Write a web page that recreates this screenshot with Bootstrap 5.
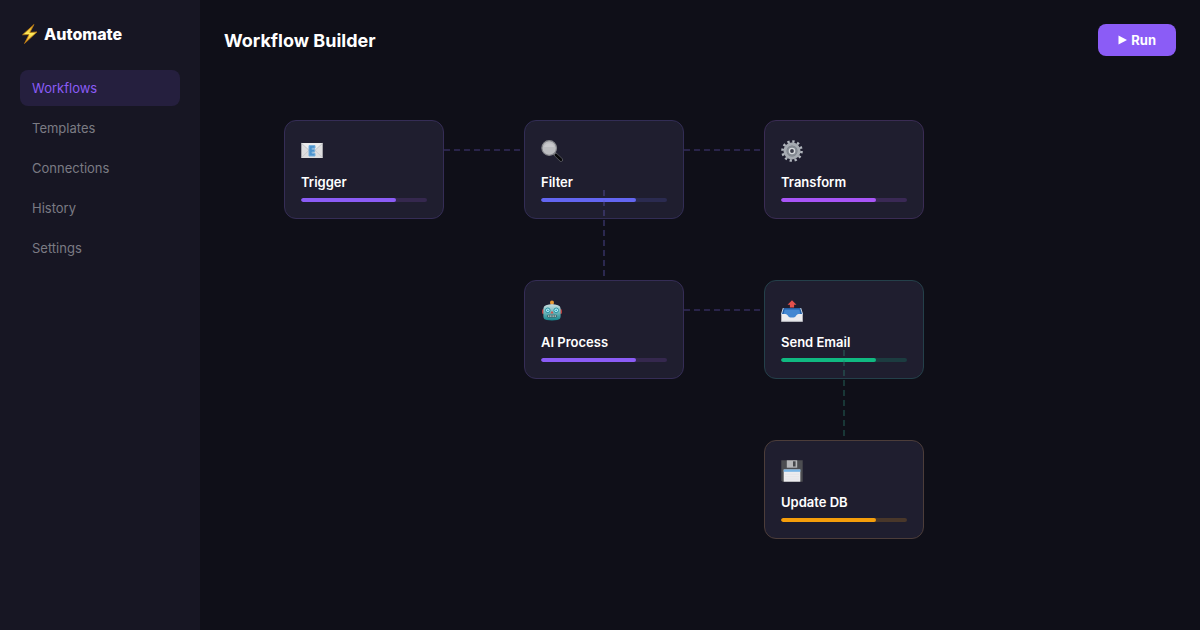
<!DOCTYPE html>
<html lang="en">
<head>
<meta charset="utf-8">
<meta name="viewport" content="width=device-width, initial-scale=1">
<title>Workflow Builder</title>
<link href="https://cdn.jsdelivr.net/npm/bootstrap@5.3.0/dist/css/bootstrap.min.css" rel="stylesheet">
<style>
  body { background: #0f0f18; color: #fff; font-family: Inter, "Liberation Sans", sans-serif; font-size: 13px; line-height: 20px; }
  .sidebar { width: 200px; background: #171623; padding: 20px; }
  .brand { font-size: 16px; line-height: 28px; font-weight: 800; margin-bottom: 22px; }
  .side-nav { gap: 4px; }
  .side-nav .nav-link { color: #7b7b83; padding: 8px 12px; border-radius: 8px; }
  .side-nav .nav-link.active { background: #251f3e; color: #8b5cf6; }
  .page-title { font-size: 18px; line-height: 30px; font-weight: 700; padding-top: 2px; }
  .run-btn, .run-btn:hover { background: #8b5cf6; border: 0; color: #fff; border-radius: 8px; font-size: 13px; line-height: 20px; font-weight: 700; padding: 6px 20px; }
  .flow { min-height: 500px; margin-top: 24px; }
  .node { --c: #8b5cf6; --edge: #352d56; --track: #35284e; width: 160px; padding: 16px; background: #1f1e2f; border: 1px solid var(--edge); border-radius: 12px; }
  .node svg { display: block; width: 22px; height: 22px; margin: 3px 0 10px; }
  .node-name { font-weight: 600; line-height: 20px; }
  .node .progress { height: 4px; margin-top: 6px; border-radius: 2px; background: var(--track); }
  .node .progress-bar { background: var(--c); border-radius: 2px; }
  .indigo { --c: #6366f1; --edge: #322d55; --track: #2b2b50; }
  .violet { --c: #a855f7; --edge: #3a2c54; --track: #3a2955; }
  .green { --c: #10b981; --edge: #24404a; --track: #1c3c40; }
  .amber { --c: #f59e0b; --edge: #4c3d3a; --track: #49372a; }
  .col-a { left: 60px; } .col-b { left: 300px; } .col-c { left: 540px; }
  .row-a { top: 40px; } .row-b { top: 200px; } .row-c { top: 360px; }
  .link-h { width: 80px; height: 2px; margin-left: 160px; margin-top: 29px; background: repeating-linear-gradient(90deg, #29244a 0 6px, transparent 6px 10px); }
  .link-v { width: 2px; height: 90px; margin-left: 79px; margin-top: 70px; background: repeating-linear-gradient(180deg, rgba(99,91,190,.33) 0 6px, transparent 6px 10px); }
  .link-v.green { background: repeating-linear-gradient(180deg, rgba(42,125,108,.36) 0 6px, transparent 6px 10px); }
</style>
</head>
<body>
<div class="d-flex min-vh-100">
  <aside class="sidebar flex-shrink-0">
    <div class="brand d-flex align-items-center">
      <svg class="me-1" width="20" height="22" viewBox="0 0 20 22" aria-hidden="true"><defs><linearGradient id="bolt" x2="0" y2="1"><stop stop-color="#d99419"/><stop offset=".5" stop-color="#fff05c"/><stop offset="1" stop-color="#e58b18"/></linearGradient></defs><path d="M14 1.500 2.500 11.800 9 11.500 4.500 20.500 17 8.900 9.800 9.500z" fill="url(#bolt)" stroke="#b97813" stroke-width=".8" stroke-linejoin="round"/></svg>
      Automate
    </div>
    <nav class="side-nav nav flex-column" aria-label="Main">
      <a class="nav-link active" aria-current="page" href="#">Workflows</a>
      <a class="nav-link" href="#">Templates</a>
      <a class="nav-link" href="#">Connections</a>
      <a class="nav-link" href="#">History</a>
      <a class="nav-link" href="#">Settings</a>
    </nav>
  </aside>
  <main class="flex-grow-1 p-4">
    <header class="d-flex justify-content-between align-items-center">
      <h1 class="page-title m-0">Workflow Builder</h1>
      <button type="button" class="btn run-btn d-flex align-items-center"><svg class="me-1" width="9" height="10" viewBox="0 0 9 10" aria-hidden="true"><path d="M.5.600 9 5 .5 9.400z" fill="#fff"/></svg>Run</button>
    </header>
    <section class="flow position-relative" aria-label="Workflow canvas">
      <article class="node position-absolute col-a row-a">
        <svg viewBox="0 0 22 22" aria-hidden="true"><path d="M.3 3h21.400v15H.3z" fill="#dededf"/><path d="m.5 17.700 8-8M21.500 17.700l-8-8" stroke="#c1c3c8" stroke-width=".7"/><path d="m.5 3.300 8.600 8q1.900 1.500 3.800 0l8.600-8" fill="#ececed" stroke="#b5b7bd" stroke-width=".7"/><path d="M8 5.600h6v2.600h-3v1.300h2.600V12H11v1.300h3V16H8z" fill="#4b93ce" stroke="#79afdb" stroke-width="1"/></svg>
        <div class="node-name">Trigger</div>
        <div class="progress"><div class="progress-bar" style="width:75%"></div></div>
      </article>
      <article class="node indigo position-absolute col-b row-a">
        <svg viewBox="0 0 22 22" aria-hidden="true"><path d="m13.500 13.500 6.600 6.300" stroke="#65676c" stroke-width="3.800" stroke-linecap="round"/><path d="m15 15 5 4.800" stroke="#08080a" stroke-width="2.600" stroke-linecap="round"/><circle cx="8.200" cy="8" r="7.300" fill="#bcbdc0" stroke="#85868b" stroke-width="1.200"/><path d="M3 7a5.500 5.500 0 0 1 10.500 0" fill="#c9c9cc"/></svg>
        <div class="node-name">Filter</div>
        <div class="progress"><div class="progress-bar" style="width:75%"></div></div>
      </article>
      <article class="node violet position-absolute col-c row-a">
        <svg viewBox="0 0 22 22" aria-hidden="true"><circle cx="11" cy="11" r="9.500" fill="none" stroke="#b3b8bf" stroke-width="2.600" stroke-dasharray="2.300 2.674"/><circle cx="11" cy="11" r="7" fill="#777d85" stroke="#a6abb2" stroke-width="3"/><circle cx="11" cy="11" r="5.200" fill="#858b93"/><circle cx="11" cy="11" r="2.600" fill="#3a3c49" stroke="#d5d8dc" stroke-width="1.400"/></svg>
        <div class="node-name">Transform</div>
        <div class="progress"><div class="progress-bar" style="width:75%"></div></div>
      </article>
      <article class="node position-absolute col-b row-b">
        <svg viewBox="0 0 22 22" aria-hidden="true"><defs><linearGradient id="face" x2="0" y2="1"><stop stop-color="#c8dedf"/><stop offset=".55" stop-color="#68b2b8"/><stop offset="1" stop-color="#14858c"/></linearGradient></defs><rect x="1" y="9" width="20" height="5" rx="1.500" fill="#b73d3d"/><path d="M9.500 3h3v3h-3z" fill="#8d8479"/><circle cx="11" cy="2.400" r="2" fill="#e99a35"/><path d="M5 5.200q6-2 12 0 2.600.8 2.600 3.400v8q0 3-3.300 3.500-5.300.8-10.600 0-3.300-.5-3.300-3.500v-8Q2.400 6 5 5.200z" fill="url(#face)"/><circle cx="6.800" cy="10.300" r="2.300" fill="#b8f5ff" stroke="#258e9d"/><circle cx="15.200" cy="10.300" r="2.300" fill="#b8f5ff" stroke="#258e9d"/><circle cx="6.800" cy="10.300" r=".9" fill="#3199b4"/><circle cx="15.200" cy="10.300" r=".9" fill="#3199b4"/><path d="m11 10.800 1.700 2.700H9.300z" fill="#cf5148"/><rect x="6.200" y="14.800" width="9.600" height="2.600" rx="1" fill="#365b62"/><path d="M7.800 15.200v1.800m2.100-1.800v1.800m2.200-1.800v1.800m2.100-1.800v1.800" stroke="#d0e2e0" stroke-width="1"/></svg>
        <div class="node-name">AI Process</div>
        <div class="progress"><div class="progress-bar" style="width:75%"></div></div>
      </article>
      <article class="node green position-absolute col-c row-b">
        <svg viewBox="0 0 22 22" aria-hidden="true"><path d="M2.300 8h17.400l2 6.500H.3z" fill="#245fa5"/><path d="M3.600 9.500h14.800l1.200 5-3 4H5.400l-3-4z" fill="#4488d2"/><path d="M.3 14h4.200q1.500 0 2.300 1.600.9 1.900 2.600 1.900h3.200q1.700 0 2.600-1.900Q16 14 17.500 14h4.200v7.600H.3z" fill="#ededef"/><path d="M.3 20.800h21.400v.9H.3z" fill="#c3c5ca"/><path d="m2.300 8-2 6.500M19.700 8l2 6.500" stroke="#c8d6e5" stroke-width="1"/><path d="m11 .2 4.500 4.600h-2.400v2.800H8.900V4.800H6.500z" fill="#e3514c"/></svg>
        <div class="node-name">Send Email</div>
        <div class="progress"><div class="progress-bar" style="width:75%"></div></div>
      </article>
      <article class="node amber position-absolute col-c row-c">
        <svg viewBox="0 0 22 22" aria-hidden="true"><path d="M.3.300h21.400v21.400H1.500L.3 20.500z" fill="#4c4d51"/><path d="M5.800.300h10.400v7.400H5.800z" fill="#b6b7b9"/><path d="M12 1.300h2.600v5.200H12z" fill="#47484c"/><path d="M2.700 9.500h16.600v12.200H2.700z" fill="#ececef"/><path d="M2.700 9.500h16.600v2.300H2.700z" fill="#78b5e5"/><path d="M4 14.300h14M4 16.700h14M4 19.100h14" stroke="#dcdde2" stroke-width=".5"/></svg>
        <div class="node-name">Update DB</div>
        <div class="progress"><div class="progress-bar" style="width:75%"></div></div>
      </article>
      <div class="link-h position-absolute col-a row-a"></div>
      <div class="link-h position-absolute col-b row-a"></div>
      <div class="link-h position-absolute col-b row-b"></div>
      <div class="link-v position-absolute col-b row-a"></div>
      <div class="link-v green position-absolute col-c row-b"></div>
    </section>
  </main>
</div>
<script src="https://cdn.jsdelivr.net/npm/bootstrap@5.3.0/dist/js/bootstrap.bundle.min.js"></script>
</body>
</html>
